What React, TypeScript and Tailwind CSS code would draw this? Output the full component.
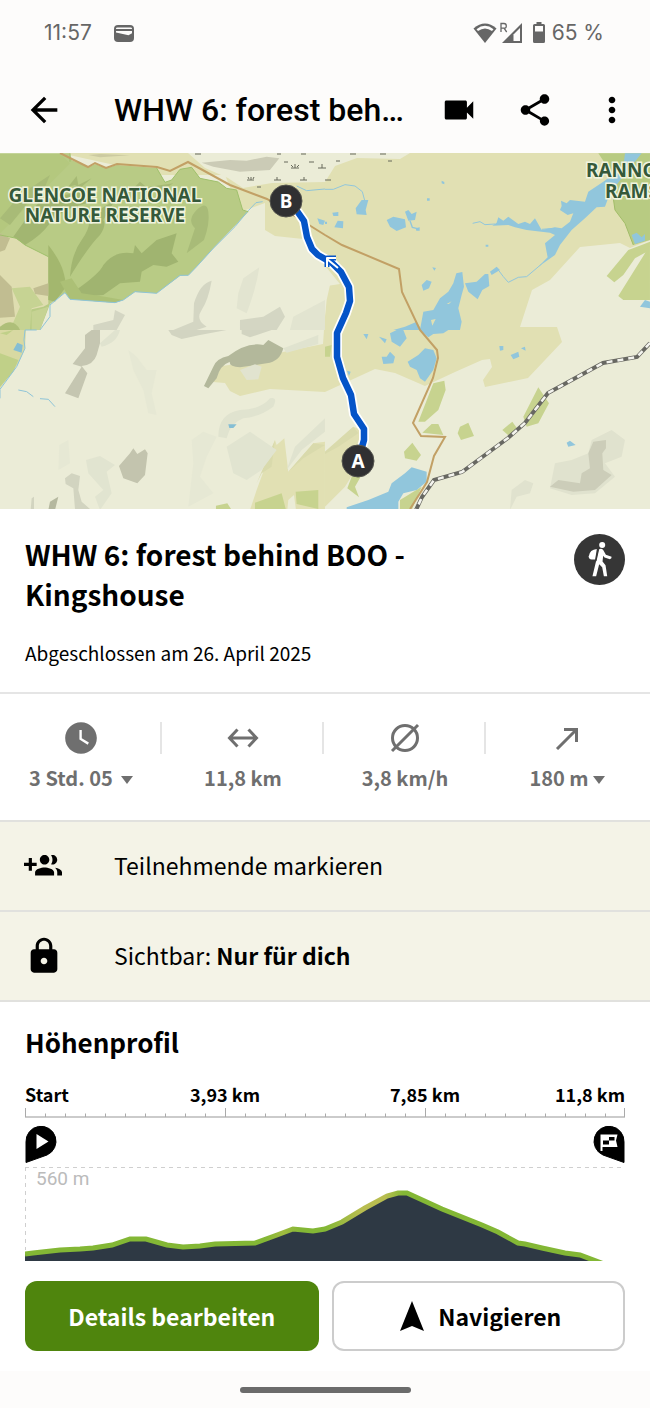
import { ReactNode } from "react";
import { MdArrowBack, MdLock, MdMoreVert, MdShare, MdVideocam, MdWatchLater } from "react-icons/md";

const TITLE = "WHW 6: forest behind BOO - Kingshouse";

const StatusBar = () => (
  <div className="flex h-[66px] items-center justify-between pl-11 pr-[46px] font-[Inter,sans-serif] text-[21px] text-[#666]">
    <div className="flex items-center gap-[22px]">
      <span>11:57</span>
      <svg className="h-[17px] w-5" viewBox="0 0 20 17" aria-hidden="true">
        <rect width="20" height="17" rx="4" fill="#666" />
        <path d="M2 3.6Q2 2.4 3.4 2.4H16.6Q18 2.4 18 3.6V4H2Z M2 6H18V8.3L14.5 10.3L2 7.6Z" fill="#fdfcfb" />
      </svg>
    </div>
    <div className="flex items-center gap-[7px]">
      <svg className="h-[22px] w-[72px]" viewBox="477 21 72 22" aria-hidden="true">
        <path d="M477.5 27.5Q489 17.500 500.500 27.500L489 42Z" fill="#666" />
        <path d="M480.500 28.200Q489 21.500 497.500 28.200L496 30Q489 25 482 30Z" fill="#fdfcfb" />
        <path d="M505 31V22.500H508Q510.300 22.500 510.300 25T508 27.200H505M508 27.200L510.700 31" fill="none" stroke="#666" strokeWidth="1.300" />
        <path d="M506 42L526 22V42Z" fill="#666" />
        <path d="M517.500 33.500L524 27V40H517.500Z" fill="#fdfcfb" />
        <path d="M540.500 21H545.500V23H547.500Q549 23 549 24.500V40.500Q549 42 547.500 42H538.500Q537 42 537 40.500V24.500Q537 23 538.500 23H540.500Z" fill="#666" />
        <path d="M539 25H547V30.500H539Z" fill="#fdfcfb" />
      </svg>
      <span>65 %</span>
    </div>
  </div>
);

const AppBar = () => (
  <header className="flex h-[87px] items-center pl-6 pr-[18px] text-black">
    <button aria-label="Zurück" className="mr-[50px] shrink-0">
      <MdArrowBack className="size-10" />
    </button>
    <div className="mr-auto w-[290px] truncate font-[Roboto,sans-serif] text-[32px] font-medium">{TITLE}</div>
    <div className="flex shrink-0 items-center gap-[38px]">
      <button aria-label="Video">
        <MdVideocam className="size-[38px]" />
      </button>
      <button aria-label="Teilen">
        <MdShare className="size-[38px]" />
      </button>
      <button aria-label="Mehr">
        <MdMoreVert className="size-10" />
      </button>
    </div>
  </header>
);

const NW = "translate(0 150) scale(.3333)";
const NE = "translate(325 150) scale(.3333)";
const SW = "translate(0 330) scale(.3333)";
const SE = "translate(325 330) scale(.3333)";

const ROAD =
  "M60 153L88 167L95 163L106 168L117 164L157 167L170 171L188 162L230 185L267 199L293 215L325 235L342 245L399 269L402 292L420 330L437 350L438 358L433 378L413 423L421 436L445 437L434 456L427 482L410 509";
const RAIL = "M650 343L637 357L603 363L548 393L525 423L508 438L462 472L434 480L422 497L416 510";
const ROUTE =
  "M286 201L297 211L304 221L307 237L312 249L318 255L332 263L341 272L349 287L350 301L346 313L337 333L337 357L343 378L351 395L354 414L364 429L364 440L358 461";

const Terrain = () => (
  <>
    <rect y="153" width="650" height="356" fill="#ebecd7" />
    <path d="M60 153H650V240L630 248L620 243L580 247L550 280L532 290L520 327H557L562 342L528 378L485 387L483 380L492 367L490 359L482 360L455 372L425 386L395 373L375 369L325 392L270 389L240 396L230 391L225 383L213 382L222 366L250 362L283 352L323 344L327 286L340 284L303 239L275 236L265 230V203L240 212L225 175L160 175Z" fill="#e1e0b3" />
    <path d="M188 153H410L400 159L357 158L335 166L325 182L272 183L243 188L228 178L205 168Z" fill="#ebecd7" />

    <g transform={NW}>
      <path d="M0 10H210L215 30L265 52L285 42L318 55L350 45L470 54L495 97L515 90L540 58L575 52L600 85L655 96L680 115L710 120L728 180L745 185L640 295L590 350L565 376L540 378L470 430L405 426L370 450L345 458L210 448L195 428L150 462L120 540H0Z" fill="#b8cb85" />
      <path d="M0 255L50 265L75 285L145 320V462L130 470L95 478L68 540H0Z" fill="#dfddb0" />
      <path d="M0 12H180L210 40L140 110L60 190L0 250Z" fill="#b4c87e" />
      <path d="M40 260Q90 190 110 165T230 130L290 120L260 160Q180 180 150 220T75 285Z" fill="#a2b671" />
      <path d="M0 205L60 135L150 75L135 110L90 150L30 225Z" fill="#a8bb77" />
      <path d="M210 380Q215 310 245 270T265 200L345 150L310 210Q320 225 300 255Q265 290 210 380Z" fill="#a2b671" />
      <path d="M228 420Q300 370 310 345Q345 300 400 310L405 285L425 310L470 270L530 250L515 310L535 335L500 350L460 345L425 365L420 395L360 400L310 435L250 440Z" fill="#a0b470" />
      <path d="M560 310L585 235Q560 210 590 180T625 185T612 270Z" fill="#a8bb78" />
      <path d="M145 285Q180 330 190 365T195 415L165 455L145 450Z" fill="#a3b76e" />
      <path d="M205 110L230 78L235 105L275 85L240 115L225 105Z M405 110L420 95L440 112L520 100L480 125Z" fill="#a6b974" />
      <path d="M180 395L215 385L245 430L315 440L370 450L345 458L210 448Z" fill="#acc076" />
      <path d="M0 250L30 265L15 300L0 305Z M0 375L35 410L45 500L0 503Z M100 415L145 400V438L105 432Z" fill="#c1bd91" />
      <path d="M35 415L90 410L130 465L95 475L90 540H30L60 470Z M95 485L145 470L120 540H95Z" fill="#c6d393" />
      <path d="M0 530Q40 500 60 540H0Z" fill="#aebf79" />
      <path d="M605 38L690 30L740 32L800 20L838 25L810 60L720 65L640 50Z" fill="#cbcbb6" />
      <path d="M265 15L300 12L390 16L300 22Z" fill="#cccaa1" />
      <path d="M520 540L580 515L582 460Q600 400 635 392Q625 450 605 480T620 530L590 540Z M720 510L790 500L840 470L855 500L830 540H720Z M280 525L340 510L345 480L375 495L350 540H280Z" fill="#d4d6c3" />
      <path d="M715 430L730 385L778 352Q770 410 740 490L710 475Z M870 540L880 500L975 450V540Z" fill="#e2e4d0" />
      <path d="M745 182L705 230L640 295L590 350L565 376L540 376L470 430L405 425L370 450L345 458L210 448L195 428L150 465V500L120 540M745 182L768 158L788 155M890 108L920 122L975 117" fill="none" stroke="#8ec4d8" strokeWidth="3" />
      <path d="M210 10V35M470 54L495 97L515 90L540 58L575 52L600 85L655 96L680 115L710 120L728 180L745 185M0 255L50 265L75 285L145 320" fill="none" stroke="#9fc06b" strokeWidth="3" />
      <path d="M952 205L975 212L970 225L958 222Z" fill="#91c6dc" />
    </g>

    <g stroke="#67695a" strokeWidth="1">
      <path
        d="M195 154h6M277 154h4M301 154h5M284 162h4M309 162h5M336 161h4M388 161h4M291 168h8M318 168h8M247 180h7M274 180h7M300 180h7M257 187h4M325 180h6M350 154h6M380 154h6"
        fill="none"
      />
      <path d="M295 168v-4M293 167l-2-2M297 167l2-2M322 168v-4M251 180v-3M249 179l-1-2M253 179l1-2M277 180v-3M304 180v-3" />
    </g>

    <g transform={NE}>
      <path d="M820 10H975V270L925 285L900 220L870 180L865 145L840 40Z" fill="#b8cb82" />
      <path d="M845 378L910 300L950 285L975 275V300L930 325L895 375L868 397Z M880 438L960 310L975 290V450H895Z" fill="#c7d38f" />
      <g fill="#91c6dc">
        <path d="M900 10L895 50L835 95L790 125L780 155L735 150L725 160L708 152L710 168L705 180L728 195L745 190L735 215L710 235L690 232L650 240L630 205L615 222L600 215L580 222L550 200L535 212L520 202L515 218L502 227L550 225L570 232L605 240L675 248L690 255L660 280L668 322L640 350L690 315L705 285L740 240L780 205L815 172L840 170L855 130L890 85L950 10Z" />
        <path d="M185 210L205 200L240 208L243 232L215 243L195 230Z M240 185L250 180L260 192L275 185L270 210L250 212Z M92 175L110 150L130 150L122 180L125 195L95 193Z M22 188L40 186V198H25Z M38 212L55 214L54 235L28 232Z M0 215H6V222H0Z" />
        <path d="M394 370L412 366L417 410L410 435L400 475L410 515L405 540H285L295 485L325 480L345 445L370 425L385 400Z M420 400L455 395L480 372L490 372L493 408L472 420L458 448L430 425Z M495 365L515 350L525 360L500 375Z M290 405L305 390L320 395L312 415L295 422Z M322 352L333 354L328 362Z M350 92L358 96V103L350 100Z M306 145H314V152H306Z M482 284H490V290H482Z M272 235L284 232V242H274Z M945 470L960 450L975 455V475Z M920 255L935 248L950 262L960 252V272L930 282Z M205 540L240 530L275 515L290 540Z" />
      </g>
      <g fill="none" stroke="#91c6dc" strokeWidth="4">
        <path d="M690 235L650 238M443 220L465 215L480 224L510 222M520 360L535 380L550 397L580 382L605 380L650 342M0 118L25 118L60 104L90 108L112 125L120 155" strokeWidth="3" />
        <path d="M255 212L262 232L278 236" />
      </g>
      <path d="M318 510l14-3-10 20zM365 462l15-8-8 8z" fill="#e1e0b3" />
      <path d="M865 145L870 180L900 220L925 285" fill="none" stroke="#a2bd68" strokeWidth="3" />
      <path d="M0 360L35 400L15 405L5 450L0 500Z" fill="#ebecd7" />
    </g>

    <g transform={SW}>
      <path d="M0 0H78L75 55L55 100L0 175Z" fill="#d8d9a2" />
      <path d="M0 70L55 90L40 125L0 170Z M0 10L40 0L20 15Z" fill="#c0d088" />
      <path d="M770 480L825 330L830 345L853 325L865 425L940 340L975 335V540H750Z" fill="#e1e0b3" />
      <path d="M770 460L825 330L815 410L785 430Z M865 425L940 340L975 345L910 385Z" fill="#d9daac" />
      <path d="M765 518L845 490L858 540H765Z M887 485L955 480V537L890 522Z M648 527L682 520L695 540H648Z" fill="#c7d38f" />
      <path d="M862 540L865 510L882 495L888 540Z" fill="#ebecd7" />
      <path d="M685 78Q740 35 790 45L805 30L850 55Q840 95 800 100L720 112Q685 110 690 95Q660 105 650 145L625 175L612 168L640 110Q650 85 685 78Z" fill="#b3b89b" />
      <path d="M720 120L765 103L785 110L775 148L740 150Z" fill="#e1e3cf" />
      <path d="M275 0H300V40L290 75Q280 105 245 108L262 130L235 205L195 190L245 110L218 102L255 55V15Z" fill="#c5c6b1" />
      <path d="M505 0H680L600 15L545 27L515 15Z M725 0H815L750 22L725 12Z" fill="#d2d4c1" />
      <path d="M390 370L400 355L412 372L435 358L443 370L435 435L412 460L370 445L357 408Z" fill="#c3c4ae" />
      <path d="M195 445L215 430L240 438L235 480L245 515L270 537H225L220 475L197 462Z M95 505L102 500V540H92Z" fill="#d2d4c0" />
      <path d="M145 540L150 515L175 500L165 540Z" fill="#b5b89f" />
      <path d="M258 390L300 378L345 405L320 425L335 490L300 540L285 500L310 480L265 430Z M680 350L750 305L830 360L785 420L740 450L700 430Z" fill="#e1e4d0" />
      <path d="M178 345L205 330L210 400L175 420Z M575 330L610 305L650 320L620 380L600 440L640 490L565 530L580 400Z M385 60L410 80L440 120L470 120L455 190L470 255L445 250L430 180L400 120Z" fill="#e6e8d4" />
      <path d="M655 320Q655 250 720 240Q780 240 810 205Q835 200 820 230Q780 260 730 265Q690 280 680 325Z M860 420L885 350L975 265V305L905 360Z M300 40L345 0H360Q350 40 305 50Z M850 55L955 15V42L860 68Z" fill="#e0e3cf" />
      <path d="M110 0H75L72 30L75 55L50 110L0 178V205M55 180L80 185L100 200M120 206L145 208L165 230" fill="none" stroke="#8ec4d8" strokeWidth="3" />
      <path d="M40 60L52 38L68 45L65 68Z M685 283H710L700 294H688Z" fill="#85bed4" />
    </g>

    <g transform={SE}>
      <path d="M0 500L0 365L85 290L110 300V390L60 470L0 530Z" fill="#e1e0b3" />
      <path d="M0 365L85 290L100 310L40 350L0 372Z" fill="#d9daac" />
      <path d="M280 275L325 160L358 152L362 180L340 240L300 275Z M292 308L320 282H340L355 315Z M398 310L405 290L430 278L447 318L408 330Z M595 260L640 172L672 220L640 280L605 290Z M532 300L562 275L580 300L555 320Z M237 365L262 338L288 375L275 392L240 385Z M225 540V510L290 470L260 540Z M67 475L80 440L110 435L90 470L102 502Z M0 50L20 45L15 80H0Z" fill="#c7d38f" />
      <g fill="#91c6dc">
        <path d="M65 532L130 510L190 485L200 460L240 430L260 412L305 425V455L275 480L235 490L220 515V540H65Z" />
        <path d="M248 95L280 75L300 55L325 60L335 85L325 120L300 155L285 145L275 120L255 110Z M170 80H185L195 65L210 80L205 100L175 102Z M195 10L215 0H235L245 25L225 50L200 35Z M115 12H130L125 28Z M162 20L185 28L180 40Z M285 0H370L355 10L325 12L310 22Z M557 75L580 65L583 80L565 88Z M523 48H535V60L525 62Z M588 55L600 50L602 62Z M66 122L77 125L72 138Z M725 338L735 332L752 345L730 350Z" />
      </g>
      <path d="M555 540L560 480L600 450L625 460L615 490L575 500Z M690 400L740 390L790 370L800 330L860 300L900 330L890 380L840 400L870 440L810 490L740 495L675 475Z" fill="#e0e2ce" />
      <path d="M675 470L700 450L765 460L770 430L795 415L790 370L805 335L843 330V355L832 370L835 420L860 435L810 480L745 485Z" fill="#cccdb9" />
    </g>
  </>
);

const MapPin = ({ x, y, label }: { x: number; y: number; label: string }) => (
  <g>
    <circle cx={x} cy={y} r="16" fill="#303032" stroke="#55554f" strokeWidth="1" />
    <text x={x} y={y + 7} textAnchor="middle" fill="#fff" className="font-['Noto_Sans',sans-serif] text-[19px] font-bold">
      {label}
    </text>
  </g>
);

const RouteMap = () => (
  <svg className="block w-full" viewBox="0 153 650 356" role="img" aria-label="Karte der Tour">
    <Terrain />
    <path d={ROAD} fill="none" stroke="#c2a065" strokeWidth="2" />
    <path d={RAIL} fill="none" stroke="#686862" strokeWidth="4" />
    <path d={RAIL} fill="none" stroke="#f4f4ee" strokeWidth="2.500" strokeDasharray="6 5" />
    <g
      fill="#35593a"
      stroke="#f1f4df"
      strokeWidth="3"
      paintOrder="stroke"
      className="font-['Noto_Sans',sans-serif] text-[19px] font-bold"
    >
      <text textAnchor="middle">
        <tspan x="105" y="202">GLENCOE NATIONAL</tspan>
        <tspan x="105" y="222">NATURE RESERVE</tspan>
      </text>
      <text>
        <tspan x="586" y="177">RANNOCH</tspan>
        <tspan x="605" y="198">RAMSAR</tspan>
      </text>
    </g>
    <g fill="none" strokeLinejoin="round">
      <path d={ROUTE} stroke="#fff" strokeWidth="10" />
      <path d={ROUTE} stroke="#0454c8" strokeWidth="6.500" />
      <path d="M338 268L327 259M327 267V258H336" stroke="#0454c8" strokeWidth="5" />
      <path d="M338 268L327 259M327 267V258H336" stroke="#fff" strokeWidth="2" />
    </g>
    <MapPin x={286} y={201} label="B" />
    <MapPin x={358} y={461} label="A" />
  </svg>
);

const HikingBadge = () => (
  <svg className="size-[51px] shrink-0" viewBox="103 42 152 152" role="img" aria-label="Wandern">
    <circle cx="179" cy="118" r="76" fill="#363636" />
    <g fill="#fff">
      <circle cx="187" cy="75" r="9" />
      <path d="M171 87Q150 89 147 108Q146 117 156 118H166Z" />
      <path d="M176 89Q184 83 190 90L198 104L215 110Q216 116 210 117L194 112L190 107L188 124L197 135L202 168H192L187 141L178 132L169 168H158L168 126Z" />
    </g>
    <path d="M176 87L168 123" stroke="#363636" strokeWidth="4" />
  </svg>
);

const GroupAddIcon = () => (
  <svg className="size-[38px]" viewBox="0 0 24 24" fill="currentColor" aria-hidden="true">
    <path d="M8 10H5V7H3v3H0v2h3v3h2v-3h3v-2zm10 1c1.66 0 2.99-1.34 2.99-3S19.66 5 18 5c-.32 0-.63.05-.91.14.57.81.9 1.79.9 2.86s-.34 2.04-.9 2.86c.28.09.59.14.91.14zm-5 0c1.66 0 2.99-1.34 2.99-3S14.66 5 13 5c-1.66 0-3 1.34-3 3s1.34 3 3 3zm6.620 2.160c.83.73 1.380 1.660 1.380 2.840v2h3v-2c0-1.540-2.370-2.490-4.380-2.840zM13 13c-2 0-6 1-6 3v2h12v-2c0-2-4-3-6-3z" />
  </svg>
);

const Caret = () => (
  <svg className="mt-[3px] h-2 w-3" viewBox="0 0 12 8" aria-hidden="true">
    <path d="M0 0H12L6 8Z" fill="currentColor" />
  </svg>
);

const Stat = ({ icon, children }: { icon: ReactNode; children: ReactNode }) => (
  <div className="relative flex flex-col items-center gap-2 after:absolute after:right-0 after:top-0 after:h-8 after:w-[2px] after:bg-[#e5e5e5] last:after:hidden">
    <div className="flex h-8 items-center">{icon}</div>
    <div className="flex h-8 items-center gap-2 text-[20px] font-bold">{children}</div>
  </div>
);

const Stats = () => (
  <section className="grid h-[128px] grid-cols-4 border-t-2 border-[#e5e5e5] pr-[2px] pt-7 text-[#6f6f6f]">
    <Stat icon={<MdWatchLater className="size-[38px]" />}>
      <button className="flex items-center gap-2">
        3 Std. 05 <Caret />
      </button>
    </Stat>
    <Stat
      icon={
        <svg className="h-5 w-8" viewBox="0 0 32 20" fill="none" stroke="currentColor" strokeWidth="3" aria-hidden="true">
          <path d="M2 10H30M10.500 1.500L2.500 10L10.500 18.500M21.500 1.500L29.500 10L21.500 18.500" />
        </svg>
      }
    >
      11,8 km
    </Stat>
    <Stat
      icon={
        <svg className="size-8" viewBox="0 0 32 32" fill="none" stroke="currentColor" strokeWidth="3" aria-hidden="true">
          <circle cx="16" cy="16" r="12.500" />
          <path d="M3 29L29 3" />
        </svg>
      }
    >
      3,8 km/h
    </Stat>
    <Stat
      icon={
        <svg className="size-6" viewBox="0 0 24 24" fill="none" stroke="currentColor" strokeWidth="3" aria-hidden="true">
          <path d="M2 23L21 4M9 3.500H21.500V16" />
        </svg>
      }
    >
      <button className="flex items-center gap-1">
        180 m <Caret />
      </button>
    </Stat>
  </section>
);

const SettingRow = ({ icon, children }: { icon: ReactNode; children: ReactNode }) => (
  <button className="flex h-[90px] w-full items-center border-t-2 border-[#e1e1de] bg-[#f4f3e7] pl-6 text-left text-[23px]">
    <span className="flex w-[90px] shrink-0">{icon}</span>
    <span className="pb-[2px]">{children}</span>
  </button>
);

const ELEVATION =
  "M25 1254L33 1253L60 1250L80 1249L93 1248L112 1245L130 1239L146 1239L167 1245L183 1247L200 1246L215 1244L255 1243L277 1235L293 1229L313 1231L325 1229L342 1222L365 1208L387 1196L398 1193L407 1193L418 1198L442 1209L482 1225L498 1232L518 1243L525 1244L542 1248L565 1253L580 1255L604 1264";

const ElevationProfile = () => {
  const ticks = Array.from({ length: 31 }, (_, i) => i);
  return (
    <section className="border-t-2 border-[#e1e1de] px-[25px] pt-5">
      <h2 className="text-[26px] font-bold leading-10">Höhenprofil</h2>
      <div className="mt-[18px] grid grid-cols-6 whitespace-nowrap text-[18px] font-bold leading-7">
        <span>Start</span>
        <span className="col-span-2 text-center">3,93 km</span>
        <span className="col-span-2 text-center">7,85 km</span>
        <span className="flex justify-end">11,8 km</span>
      </div>
      <svg className="block w-full" viewBox="25 1108 600 153" role="img" aria-label="Höhenprofil der Tour">
        <defs>
          <linearGradient id="slope" gradientUnits="userSpaceOnUse" x1="25" x2="625" y1="0" y2="0">
            <stop offset=".4" stopColor="#83b735" />
            <stop offset=".43" stopColor="#a0bb40" />
            <stop offset=".46" stopColor="#83b735" />
            <stop offset=".5" stopColor="#83b735" />
            <stop offset=".56" stopColor="#b8bd50" />
            <stop offset=".6" stopColor="#b8bd50" />
            <stop offset=".63" stopColor="#83b735" />
          </linearGradient>
        </defs>
        <path d="M25 1117H625" stroke="#bababa" strokeWidth="1.500" />
        {ticks.map((i) => (
          <path
            key={i}
            d={`M${Math.min(25.5 + i * 20, 624.5)} ${i % 10 === 0 ? 1108 : 1113.5}V1117`}
            stroke="#aaa"
            strokeWidth="1"
          />
        ))}
        <path d="M26 1162.500V1142A15 15 0 1 1 47 1155Z" fill="#000" stroke="#000" strokeLinejoin="round" />
        <path d="M36.500 1134L48.500 1141.500L36.500 1149Z" fill="#fff" />
        <path d="M624 1162.500V1142A15 15 0 1 0 603 1155Z" fill="#000" stroke="#000" strokeLinejoin="round" />
        <path d="M600.500 1134.500H617.500L616 1140.500L617.500 1147H602.500V1151H600.500Z" fill="#fff" />
        <path d="M609 1137H614.500V1140.500H609Z M603 1140.500H609V1144.500H603Z" fill="#000" />
        <path d="M25 1167.500H625M25.500 1167V1250" fill="none" stroke="#cfcfcf" strokeWidth="1" strokeDasharray="4 4" />
        <text x="36" y="1185" fill="#bbb" className="font-[Roboto,sans-serif] text-[19px]">
          560 m
        </text>
        <path d={`${ELEVATION}H25Z`} fill="#2e3944" />
        <path d={ELEVATION} fill="none" stroke="url(#slope)" strokeWidth="5" />
      </svg>
    </section>
  );
};

const ActionBar = () => (
  <div className="grid grid-cols-2 gap-[13px] bg-white px-[25px] pb-5 pt-5 text-[23px] font-bold">
    <button className="h-[70px] rounded-xl bg-[#4f850d] text-white">Details bearbeiten</button>
    <button className="flex h-[70px] items-center justify-center gap-[13px] rounded-xl border-2 border-[#ccc] pl-1 text-black">
      <svg className="h-8 w-[26px]" viewBox="0 0 26 32" aria-hidden="true">
        <path d="M13 1L25 31L13 26L1 31Z" fill="currentColor" />
      </svg>
      Navigieren
    </button>
  </div>
);

export default function App() {
  return (
    <div className="flex min-h-screen flex-col bg-[#fdfcfb] font-['Noto_Sans_CJK_SC',sans-serif] text-black">
      <StatusBar />
      <AppBar />
      <main className="bg-white">
        <RouteMap />
        <section className="flex items-start justify-between px-[25px] pb-[25px] pt-[25px]">
          <div>
            <h1 className="max-w-[420px] text-[28px] font-bold leading-10">{TITLE}</h1>
            <p className="mt-[25px] text-[19px] leading-7">Abgeschlossen am 26. April 2025</p>
          </div>
          <HikingBadge />
        </section>
        <Stats />
        <SettingRow icon={<GroupAddIcon />}>Teilnehmende markieren</SettingRow>
        <SettingRow icon={<MdLock className="size-10" />}>
          Sichtbar: <strong>Nur für dich</strong>
        </SettingRow>
        <ElevationProfile />
      </main>
      <ActionBar />
      <div className="flex grow items-center justify-center">
        <div className="h-[6px] w-[171px] rounded-full bg-[#6b6b6b]" />
      </div>
    </div>
  );
}
